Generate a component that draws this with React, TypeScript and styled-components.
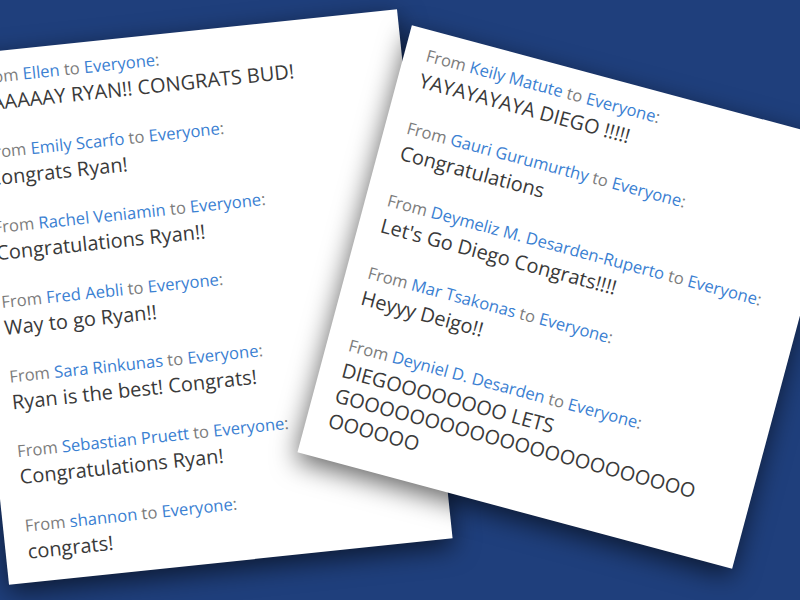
import React from "react";
import styled, { createGlobalStyle } from "styled-components";

const GlobalStyle = createGlobalStyle`
  html, body {
    margin: 0;
    padding: 0;
    background: #1f3f7c;
  }
  body {
    font-family: "Open Sans", "Noto Sans", sans-serif;
  }
`;

const Desk = styled.div`
  position: relative;
  width: 800px;
  height: 600px;
  overflow: hidden;
  background: #1f3f7c;
`;

type CardProps = {
  $left: number;
  $top: number;
  $width: number;
  $height: number;
  $angle: number;
};

// a chat panel lying on the desk, tilted
const Card = styled.div<CardProps>`
  position: absolute;
  left: ${(p) => p.$left}px;
  top: ${(p) => p.$top}px;
  width: ${(p) => p.$width}px;
  height: ${(p) => p.$height}px;
  box-sizing: border-box;
  padding: 15px 40px 0 22px;
  background: #fff;
  transform: rotate(${(p) => p.$angle}deg);
  box-shadow: 0 8px 26px rgba(0, 0, 0, 0.6);
  display: flex;
  flex-direction: column;
  gap: 26px;
  overflow: hidden;
`;

const Message = styled.div`
  display: flex;
  flex-direction: column;
  gap: 3px;
`;

const Header = styled.div`
  font-size: 16.6px;
  line-height: 20px;
  color: #7c7c7c;
  white-space: nowrap;
`;

const Name = styled.span`
  color: #3a80d2;
`;

const Body = styled.div<{ $wrap?: number }>`
  font-size: 20px;
  line-height: 26px;
  color: #3a3a3a;
  max-width: ${(p) => (p.$wrap ? `${p.$wrap}px` : "none")};
  overflow-wrap: anywhere;
`;

type Msg = { from: string; text: string };

const ryan: Msg[] = [
  { from: "Ellen", text: "YAAAAAY RYAN!! CONGRATS BUD!" },
  { from: "Emily Scarfo", text: "Congrats Ryan!" },
  { from: "Rachel Veniamin", text: "Congratulations Ryan!!" },
  { from: "Fred Aebli", text: "Way to go Ryan!!" },
  { from: "Sara Rinkunas", text: "Ryan is the best! Congrats!" },
  { from: "Sebastian Pruett", text: "Congratulations Ryan!" },
  { from: "shannon", text: "congrats!" },
];

const diego: Msg[] = [
  { from: "Keily Matute", text: "YAYAYAYAYA DIEGO !!!!!" },
  { from: "Gauri Gurumurthy", text: "Congratulations" },
  { from: "Deymeliz M. Desarden-Ruperto", text: "Let's Go Diego Congrats!!!!" },
  { from: "Mar Tsakonas", text: "Heyyy Deigo!!" },
  {
    from: "Deyniel D. Desarden",
    text: "DIEGOOOOOOOO LETS GOOOOOOOOOOOOOOOOOOOOOOOOOOOOO",
  },
];

const ChatCard = (props: CardProps & { messages: Msg[]; wrap?: number }) => {
  const { messages, wrap, ...box } = props;
  return (
    <Card {...box}>
      {messages.map((m, i) => (
        <Message key={i}>
          <Header>
            From <Name>{m.from}</Name> to <Name>Everyone</Name>:
          </Header>
          <Body $wrap={wrap}>{m.text}</Body>
        </Message>
      ))}
    </Card>
  );
};

export default function App() {
  return (
    <>
      <GlobalStyle />
      <Desk>
        <ChatCard
          messages={ryan}
          $left={-20}
          $top={31}
          $width={446}
          $height={532}
          $angle={-6}
        />
        <ChatCard
          messages={diego}
          wrap={378}
          $left={347}
          $top={76}
          $width={450}
          $height={442}
          $angle={15}
        />
      </Desk>
    </>
  );
}
